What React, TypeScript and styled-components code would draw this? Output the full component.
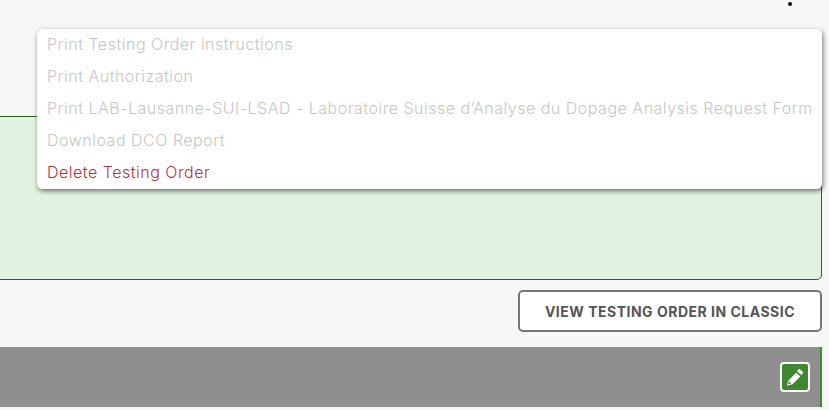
import { FC } from 'react'
import styled, { createGlobalStyle } from 'styled-components'

const GlobalStyle = createGlobalStyle`
  html, body {
    background: #f7f7f7;
    height: 100%;
    margin: 0;
    overflow: hidden;
  }
  body {
    font-family: Inter, "Noto Sans", "Liberation Sans", sans-serif;
  }
`

const Page = styled.div`
  box-sizing: border-box;
  height: 410px;
  padding: 116px 7px 0 0;
  position: relative;
  width: 829px;
`

const KebabDot = styled.span`
  background: #000;
  border-radius: 50%;
  height: 4px;
  left: 788px;
  position: absolute;
  top: 2px;
  width: 4px;
`

const Menu = styled.ul`
  background: #fff;
  border-radius: 5px;
  box-shadow: 1px 2px 5px rgba(0, 0, 0, 0.55);
  left: 37px;
  list-style: none;
  margin: 0;
  padding: 0;
  position: absolute;
  top: 29px;
  width: 785px;
  z-index: 2;
`

const MenuItem = styled.li<{ $danger?: boolean }>`
  color: ${(props) => (props.$danger ? '#b5333a' : '#c6c6c6')};
  font-size: 16px;
  font-weight: 300;
  height: 32px;
  letter-spacing: 0.51px;
  line-height: 30px;
  padding: 0 10px;
  white-space: nowrap;
`

const Notice = styled.div`
  background: #e2f2e0;
  border: 1px solid #1f6b14;
  border-left: 0;
  border-radius: 0 0 5px 0;
  box-sizing: border-box;
  height: 164px;
`

const Actions = styled.div`
  display: flex;
  justify-content: flex-end;
  margin-top: 10px;
`

const ClassicButton = styled.button`
  background: #fff;
  border: 2px solid #757575;
  border-radius: 5px;
  box-sizing: border-box;
  color: #555;
  font-family: inherit;
  font-size: 14px;
  font-weight: 700;
  height: 42px;
  letter-spacing: 0.5px;
  padding: 0;
  width: 304px;
`

const SectionBar = styled.div`
  align-items: center;
  background: #8f8f8f;
  border-right: 2px solid #3f8a33;
  box-sizing: border-box;
  display: flex;
  height: 60px;
  justify-content: flex-end;
  margin-top: 15px;
  padding-right: 10px;
`

const EditButton = styled.button`
  align-items: center;
  background: #40882f;
  border: 2px solid #fff;
  border-radius: 4px;
  box-sizing: border-box;
  display: flex;
  height: 30px;
  justify-content: center;
  padding: 0;
  width: 30px;
`

const PencilIcon: FC = () => (
  <svg width="18" height="18" viewBox="0 0 18 18" aria-hidden="true">
    <path
      fill="#fff"
      d="M12.600 1.200a1 1 0 0 1 1.300 0l2.900 2.600a1 1 0 0 1 0 1.400l-1.600 1.800-4.200-3.800zM10.200 4.800l4.100 3.600-7.800 7.900-4.800 1.300a.5.5 0 0 1-.6-.6l1.300-4.400z"
    />
    <path fill="#40882f" d="M3 13.200l2.400 2.200-2.400 .7-.8-.7z" />
  </svg>
)

const menuItems = [
  'Print Testing Order instructions',
  'Print Authorization',
  'Print LAB-Lausanne-SUI-LSAD - Laboratoire Suisse d’Analyse du Dopage Analysis Request Form',
  'Download DCO Report',
]

const App: FC = () => (
  <Page>
    <GlobalStyle />
    <KebabDot />
    <Menu>
      {menuItems.map((item) => (
        <MenuItem key={item}>{item}</MenuItem>
      ))}
      <MenuItem $danger>Delete Testing Order</MenuItem>
    </Menu>
    <Notice />
    <Actions>
      <ClassicButton>VIEW TESTING ORDER IN CLASSIC</ClassicButton>
    </Actions>
    <SectionBar>
      <EditButton aria-label="Edit">
        <PencilIcon />
      </EditButton>
    </SectionBar>
  </Page>
)

export default App
